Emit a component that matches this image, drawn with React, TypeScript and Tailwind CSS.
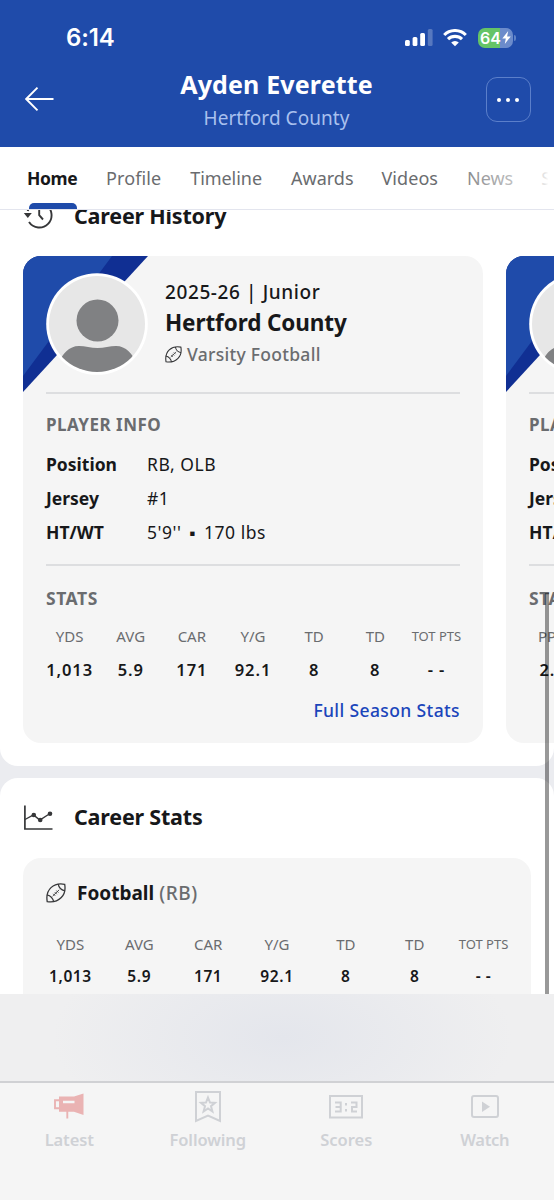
import { ReactNode } from "react"

interface Stat {
    label: string;
    value: string;
}

const tabs = [
    { name: "Profile", className: "ml-[29px] tracking-[0.1px]" },
    { name: "Timeline", className: "ml-[29px] tracking-[-0.05px]" },
    { name: "Awards", className: "ml-[29px]" },
    { name: "Videos", className: "ml-[28px] tracking-[0.05px]" },
    { name: "News", className: "ml-[29px]" },
    { name: "Schedule", className: "ml-[28px]" },
]

const rushing: Stat[] = [
    { label: "YDS", value: "1,013" },
    { label: "AVG", value: "5.9" },
    { label: "CAR", value: "171" },
    { label: "Y/G", value: "92.1" },
    { label: "TD", value: "8" },
    { label: "TD", value: "8" },
    { label: "TOT PTS", value: "- -" },
]

const basketball: Stat[] = [
    { label: "PPG", value: "2.8" },
]

const FootballIcon = ({ className }: { className: string }) => (
    <svg viewBox="0 0 20 20" fill="none" stroke="currentColor" className={className}>
        <path d="M1.200 18.600C.2 12.500 1.800 7.600 5 4.600 8.400 1.500 13.700.3 18.700 1.300c.9 5.200-.2 10-3.400 13.200C12 17.800 7.200 19.600 1.200 18.600Z" strokeWidth="1.300" />
        <path d="M12.200 1.200c.6 3.300 3 5.900 6.600 6.600M1 11.800c3.300.8 5.800 3.100 6.700 6.900" strokeWidth="1.200" />
        <path d="m6.600 13.200 6.600-6.400M7.200 10.800l2 2M8.800 9.200l2 2M10.400 7.600l2 2" strokeWidth=".9" />
    </svg>
)

const HistoryIcon = () => (
    <svg viewBox="0 0 32 30" fill="none" stroke="#363739" strokeWidth="1.900" className="h-[30px] w-8">
        <path d="M4.700 11A12.300 12.300 0 1 1 6 22" />
        <path d="M16.200 6v9.200l3.800 4.300" />
        <path d="M.8 13h8l-4 5Z" fill="#363739" stroke="none" />
    </svg>
)

const ChartIcon = () => (
    <svg viewBox="0 0 30 26" fill="none" stroke="#363739" className="h-[26px] w-[30px]">
        <path d="M1.900.5v23.500h27.600" strokeWidth="1.700" />
        <path d="m2 14.500 8.500-4.600 6.300 5.200L27 8.500" strokeWidth="1.300" />
        <g fill="#363739" stroke="none">
            <circle cx="10.800" cy="10" r="2.300" />
            <circle cx="17.200" cy="15" r="2.300" />
            <circle cx="27" cy="8.700" r="2.300" />
        </g>
    </svg>
)

const StatusBar = () => (
    <div className="flex h-[75px] items-center justify-between pl-[66px] pr-[38px] text-white">
        <span className="font-['Inter'] text-[24px] font-semibold leading-none tracking-[-0.1px]">6:14</span>
        <div className="flex items-center">
            <svg viewBox="0 0 28 18" fill="currentColor" className="h-[18px] w-7">
                <rect x="0" y="11" width="4.800" height="6" rx="1.500" />
                <rect x="7.600" y="8" width="4.800" height="9" rx="1.500" />
                <rect x="15.200" y="4" width="4.800" height="13" rx="1.500" />
                <rect x="22.800" y="0" width="4.800" height="17" rx="1.500" opacity=".25" />
            </svg>
            <svg viewBox="0 0 24 18" fill="none" stroke="currentColor" strokeWidth="3.100" className="ml-[10px] h-[18px] w-6">
                <path d="M1.200 6a15.300 15.300 0 0 1 21.600 0" />
                <path d="M5 10.200a10 10 0 0 1 14 0" />
                <path d="M8.200 13.500a5.300 5.300 0 0 1 7.600 0L12 17.300Z" fill="currentColor" stroke="none" />
            </svg>
            <div className="ml-[11px] flex h-5 w-[35px] items-center justify-center overflow-hidden rounded-[7px] bg-[linear-gradient(90deg,#65c466_64%,#6b8bcb_64%)] font-['Inter'] text-[16px] font-semibold leading-none">
                64
                <svg viewBox="0 0 9 13" fill="currentColor" className="ml-[1px] h-[13px] w-[9px]">
                    <path d="M6.200 0 .3 7.400h3.500L2.800 13l5.900-7.600H5.100Z" />
                </svg>
            </div>
            <div className="ml-[1px] h-[6px] w-[2px] rounded-r-full bg-[#5f82c6]" />
        </div>
    </div>
)

const Header = () => (
    <header className="h-[147px] bg-[#1f4baa]">
        <StatusBar />
        <div className="flex items-start justify-between pl-[25px] pr-[23px]">
            <svg viewBox="0 0 29 24" fill="none" stroke="white" strokeWidth="1.900" className="mt-[12px] h-6 w-[42px]" preserveAspectRatio="xMinYMid">
                <path d="M28.500 12H1.500M12.500.7 1.200 12l11.300 11.300" />
            </svg>
            <div className="-mt-[9px] text-center">
                <h1 className="text-[25px] font-bold leading-[36px] tracking-[0.15px] text-white">Ayden Everette</h1>
                <p className="text-[19px] leading-[33px] tracking-[0.05px] text-[#a9c0ee]">Hertford County</p>
            </div>
            <button className="mt-[2px] flex size-[45px] items-center justify-center gap-[5px] rounded-[11px] border border-[#5b7fca]">
                <i className="size-1 rounded-full bg-white" />
                <i className="size-1 rounded-full bg-white" />
                <i className="size-1 rounded-full bg-white" />
            </button>
        </div>
    </header>
)

const TabBar = () => (
    <nav className="relative z-10 flex h-[63px] overflow-hidden whitespace-nowrap border-b border-[#e3e5ee] bg-white pl-[27px] text-[18px] leading-[62px] text-[#6a6c6f]">
        <div className="flex w-[50px] flex-col font-bold text-[#17181a]">
            <span className="h-[56px] text-[17.5px] tracking-[-0.35px]">Home</span>
            <span className="ml-[2px] h-[6px] w-[48px] rounded-t-[5px] bg-[#1f4baa]" />
        </div>
        {tabs.map((tab) => (
            <span key={tab.name} className={tab.className}>{tab.name}</span>
        ))}
        <div className="absolute inset-y-0 right-0 w-[114px] bg-[linear-gradient(90deg,rgba(255,255,255,0),rgba(255,255,255,0.82)_92%,#fff_95%)]" />
    </nav>
)

const Avatar = () => (
    <svg viewBox="0 0 102 102" className="size-[102px] shrink-0">
        <defs>
            <clipPath id="face"><circle cx="51" cy="51" r="48" /></clipPath>
        </defs>
        <circle cx="51" cy="51" r="50.800" fill="white" />
        <circle cx="51" cy="51" r="48" fill="#e7e7e7" />
        <g fill="#808183" clipPath="url(#face)">
            <circle cx="51.500" cy="47.500" r="21" />
            <path d="M13 90c3-9 10-17 20-17 6 0 12 2 18.500 2S64 73 70 73c10 0 17 8 20 17v12H13Z" />
        </g>
    </svg>
)

const StatGrid = ({ stats, className, valueClass }: { stats: Stat[]; className: string; valueClass: string }) => (
    <div className={`grid grid-cols-7 whitespace-nowrap text-center ${className}`}>
        {stats.map((stat, i) => (
            <div key={i}>
                <div className={`leading-[26px] text-[#6a6c6f] ${stat.label.length > 4 ? "text-[13px]" : "text-[15px]"}`}>
                    {stat.label}
                </div>
                <div className={`font-semibold text-[#17181a] ${valueClass}`}>{stat.value}</div>
            </div>
        ))}
    </div>
)

const InfoRow = ({ label, children }: { label: string; children: ReactNode }) => (
    <div className="flex h-[34px] text-[17.5px] leading-[34px] text-[#17181a]">
        <span className="w-[101px] font-bold">{label}</span>
        <span className="tracking-[0.5px]">{children}</span>
    </div>
)

const SeasonCard = ({ season, sport, jersey, stats }: { season: string; sport: string; jersey: string; stats: Stat[] }) => (
    <article className="relative h-[487px] w-[460px] shrink-0 overflow-hidden rounded-[18px] bg-[#f5f5f5] px-[23px]">
        <svg viewBox="0 0 125 136" className="absolute left-0 top-0 h-[136px] w-[125px]">
            <path d="M0 0h125L0 136Z" fill="#102f93" />
            <path d="M0 0h89L0 120Z" fill="#1f4baa" />
        </svg>
        <div className="relative flex h-[136px] pt-[16.5px]">
            <div className="-ml-[0.5px]"><Avatar /></div>
            <div className="ml-[17.5px] mt-[4.5px] whitespace-nowrap">
                <p className="text-[19px] font-medium leading-[31px] tracking-[0.6px] text-[#17181a]">{season}</p>
                <h3 className="text-[22.5px] font-bold leading-[30px] tracking-[-0.1px] text-[#17181a]">Hertford County</h3>
                <p className="flex items-center gap-[5px] text-[17.5px] font-medium leading-[33px] tracking-[0.28px] text-[#6a6c6f]">
                    <FootballIcon className="size-[17px] text-[#363739]" />
                    {sport}
                </p>
            </div>
        </div>
        <hr className="border-t-2 border-[#dddee0]" />
        <h4 className="mt-[14px] text-[17px] font-bold leading-[34px] tracking-[0.5px] text-[#6a6c6f]">PLAYER INFO</h4>
        <div className="mt-[5px]">
            <InfoRow label="Position">RB, OLB</InfoRow>
            <InfoRow label="Jersey">{jersey}</InfoRow>
            <InfoRow label="HT/WT">5'9''<span className="mx-[8px] text-[17.5px] leading-none">▪</span>170 lbs</InfoRow>
        </div>
        <hr className="mt-[15px] border-t-2 border-[#dddee0]" />
        <h4 className="mt-[15px] text-[17.5px] font-bold leading-[34px] tracking-[0.55px] text-[#6a6c6f]">STATS</h4>
        <StatGrid stats={stats} className="-mx-[7px] mt-[8px]" valueClass="mt-[4px] leading-[34px] text-[16.500px] tracking-[0.9px]" />
        <a className="mt-[6px] block text-right text-[17.5px] font-medium leading-[34px] tracking-[0.38px] text-[#1b45bb]">Full Season Stats</a>
    </article>
)

const BottomNav = () => (
    <nav className="grid h-[119px] grid-cols-4 border-t-2 border-[#d0d1d4] bg-[#f5f5f5] text-center text-[16.5px] font-semibold text-[#cfd1d5]">
        <div>
            <svg viewBox="0 0 30 26" fill="#eab3b3" className="mx-auto mt-[10px] h-[26px] w-[30px]">
                <path fillRule="evenodd" d="M5 3.500h15L29.500.5v21.500L20 18.800H5Zm4 4.300v2.500h11.500V7.800Z" />
                <path d="M5 7.200H1v8h4M13.300 18v7.500" fill="none" stroke="#eab3b3" strokeWidth="1.900" />
            </svg>
            <div className="mt-[8px] leading-[26px] tracking-[-0.1px]">Latest</div>
        </div>
        <div>
            <svg viewBox="0 0 28 34" fill="none" stroke="currentColor" strokeWidth="2" className="mx-auto mt-[7px] h-[34px] w-7">
                <path d="M2 2h24v29l-12-5.500L2 31Z" />
                <path d="m14 7.500 2 5 5 .3-4 3.400 1.400 5.300-4.400-3-4.400 3 1.400-5.300-4-3.400 5-.3Z" />
            </svg>
            <div className="mt-[3px] leading-[26px] tracking-[-0.1px]">Following</div>
        </div>
        <div>
            <svg viewBox="0 0 34 24" fill="none" stroke="currentColor" strokeWidth="2" className="mx-auto mt-[12px] h-6 w-[34px]">
                <path d="M1 1h32v21.500H1Z" />
                <path d="M6 7.500h5.700v9H6M6.500 12h5.200M22 7.500h5.500V12H23v4.500h5M17 8v2.500M17 14v2.500" />
            </svg>
            <div className="mt-[8px] leading-[26px]">Scores</div>
        </div>
        <div>
            <svg viewBox="0 0 30 24" fill="none" stroke="currentColor" strokeWidth="2" className="mx-auto mt-[12px] h-6 w-[30px]">
                <rect x="2" y="1" width="26" height="21" rx="2" />
                <path d="M12 6.500v10.500l8-5.200Z" fill="currentColor" stroke="none" />
            </svg>
            <div className="mt-[8px] leading-[26px] tracking-[-0.3px]">Watch</div>
        </div>
    </nav>
)

export default function App() {
    return (
        <div className="flex h-[1200px] w-[554px] flex-col overflow-hidden bg-white font-['Noto_Sans',sans-serif]">
            <Header />
            <TabBar />
            <main className="relative h-[784px] overflow-hidden bg-[#ebecf0]">
                <section className="h-[556px] rounded-b-[18px] bg-white pl-[23px]">
                    <div className="flex h-[46px] items-start">
                        <div className="-mt-[10px]"><HistoryIcon /></div>
                        <h2 className="-mt-[11px] ml-[19px] text-[21.5px] font-bold leading-[34px] tracking-[-0.2px] text-[#17181a]">Career History</h2>
                    </div>
                    <div className="flex gap-[23px] overflow-hidden">
                        <SeasonCard season="2025-26 | Junior" sport="Varsity Football" jersey="#1" stats={rushing} />
                        <SeasonCard season="" sport="" jersey="" stats={basketball} />
                    </div>
                </section>
                <section className="mt-[12px] h-[230px] rounded-t-[18px] bg-white px-[23px]">
                    <div className="flex h-[79px] items-center">
                        <ChartIcon />
                        <h2 className="ml-[21px] text-[21.5px] font-bold tracking-[-0.2px] text-[#17181a]">Career Stats</h2>
                    </div>
                    <div className="mt-[1px] h-[160px] rounded-t-[18px] bg-[#f5f5f5] pt-[18px]">
                        <h3 className="flex items-center pl-[22.5px] text-[19px] font-bold leading-[34px] text-[#17181a]">
                            <FootballIcon className="mr-[11.500px] size-5 text-[#363739]" />
                            Football
                            <span className="ml-[5px] font-medium tracking-[0.6px] text-[#6a6c6f]">(RB)</span>
                        </h3>
                        <StatGrid stats={rushing} className="mx-[13px] mt-[21px]" valueClass="mt-[2px] leading-[34px] text-[15.5px] tracking-[0.6px]" />
                    </div>
                </section>
                <div className="absolute right-[5px] top-[383px] h-[401px] w-1 bg-black/40" />
            </main>
            <div className="h-[87px] bg-[radial-gradient(ellipse_230px_110px_at_51%_50%,#e4e6ec,#efeff0)]" />
            <BottomNav />
        </div>
    )
}
